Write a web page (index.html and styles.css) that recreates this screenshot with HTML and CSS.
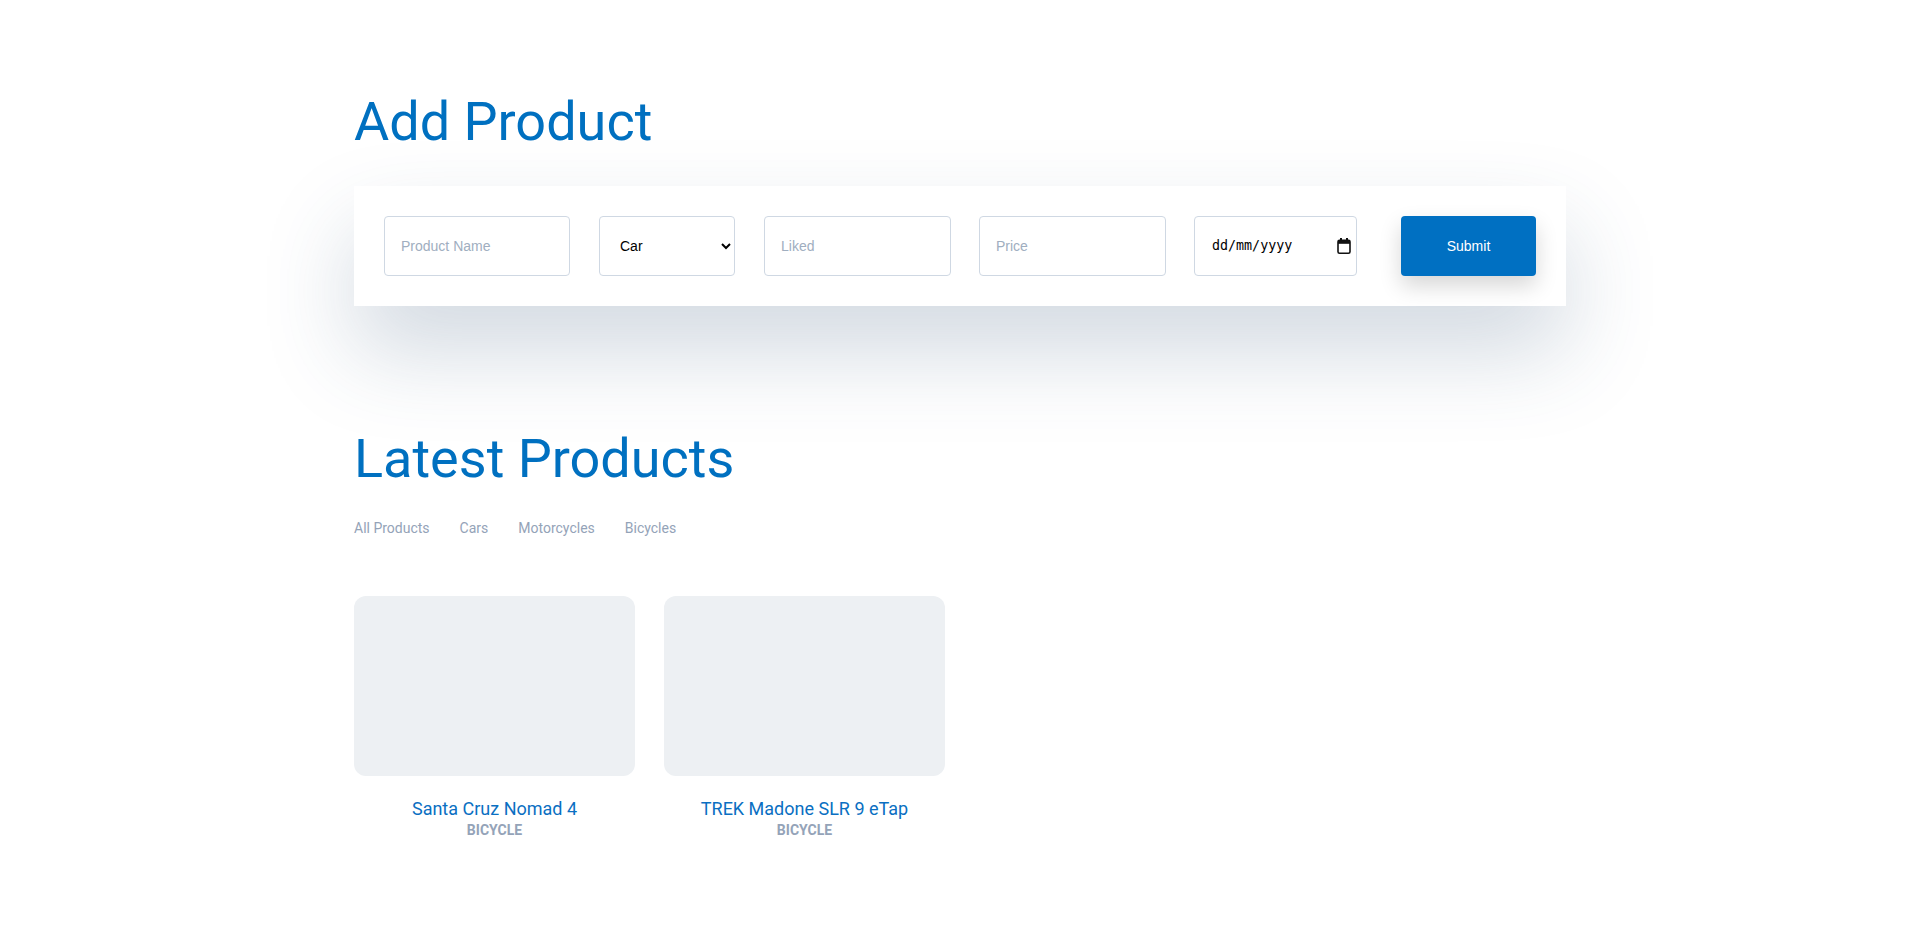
FILE: index.html
```html
<!DOCTYPE html>
<html lang="en-GB">
<head>
<meta charset="utf-8">
<title>Products</title>
<link rel="stylesheet" href="styles.css">
</head>
<body>
<main class="container">
  <h1 class="page-title">Add Product</h1>
  <form class="product-form">
    <input class="field field-name" type="text" placeholder="Product Name">
    <select class="field field-select">
      <option>Car</option>
      <option>Motorcycle</option>
      <option>Bicycle</option>
    </select>
    <input class="field field-liked" type="text" placeholder="Liked">
    <input class="field field-price" type="text" placeholder="Price">
    <label class="field field-date">
      <input class="date-text" type="text" placeholder="dd/mm/yyyy">
      <svg class="date-icon" width="14" height="16" viewBox="0 0 14 16" aria-hidden="true">
        <rect x="3" y="0" width="2" height="3" fill="#111"/>
        <rect x="9" y="0" width="2" height="3" fill="#111"/>
        <rect x="1" y="2.2" width="12" height="13" rx="1.5" fill="none" stroke="#111" stroke-width="1.6"/>
        <rect x="1" y="2.2" width="12" height="3.6" fill="#111"/>
      </svg>
    </label>
    <button class="submit-btn" type="button">Submit</button>
  </form>

  <h2 class="section-title">Latest Products</h2>
  <nav class="filters">
    <a class="filter">All Products</a>
    <a class="filter">Cars</a>
    <a class="filter">Motorcycles</a>
    <a class="filter">Bicycles</a>
  </nav>

  <section class="products">
    <article class="product">
      <div class="product-image"></div>
      <div class="product-name">Santa Cruz Nomad 4</div>
      <div class="product-type">Bicycle</div>
    </article>
    <article class="product">
      <div class="product-image"></div>
      <div class="product-name">TREK Madone SLR 9 eTap</div>
      <div class="product-type">Bicycle</div>
    </article>
  </section>
</main>
</body>
</html>
```
FILE: styles.css
```css
* { box-sizing: border-box; }

html, body {
  margin: 0;
  padding: 0;
  background: #ffffff;
}

body {
  font-family: Roboto, "Liberation Sans", Arial, sans-serif;
  color: #1f2937;
}

.container {
  width: 1212px;
  margin: 0 auto;
  padding-top: 90px;
}

.page-title,
.section-title {
  margin: 0;
  font-family: Roboto, sans-serif;
  font-weight: 400;
  font-size: 54px;
  line-height: 1.2;
  color: #0070c0;
}

.product-form {
  margin-top: 31px;
  height: 120px;
  padding: 30px;
  background: #ffffff;
  display: flex;
  align-items: center;
  box-shadow: 0 45px 90px rgba(50, 80, 120, 0.22);
}

.field {
  height: 60px;
  border: 1px solid #cfd8e3;
  border-radius: 4px;
  background: #ffffff;
  font-family: "Liberation Sans", Arial, sans-serif;
  font-size: 14px;
  color: #000000;
  padding: 0 16px;
  margin-right: 28px;
  outline: none;
}

.field::placeholder {
  color: #a0aec0;
}

.field-name { width: 186px; margin-right: 29px; }
.field-select { width: 136px; padding: 0 2px 0 16px; margin-right: 29px; }
.field-liked { width: 187px; }
.field-price { width: 187px; }

.field-date {
  width: 163px;
  padding: 0 5px 0 17px;
  margin-right: 44px;
  display: flex;
  align-items: center;
  justify-content: space-between;
  cursor: text;
}

.date-text {
  width: 100px;
  border: none;
  outline: none;
  padding: 0;
  background: transparent;
  font-family: "DejaVu Sans Mono", monospace;
  font-size: 13.33px;
  color: #000000;
}

.date-text::placeholder {
  color: #000000;
  opacity: 1;
}

.date-icon {
  display: block;
  flex: none;
}

.submit-btn {
  width: 135px;
  height: 60px;
  border: none;
  border-radius: 4px;
  background: #0070c2;
  color: #ffffff;
  font-family: "Liberation Sans", Arial, sans-serif;
  font-size: 14px;
  box-shadow: 0 10px 22px rgba(0, 0, 0, 0.16);
  cursor: pointer;
}

.section-title {
  margin-top: 121px;
}

.filters {
  margin-top: 28px;
  display: flex;
  gap: 30px;
}

.filter {
  font-family: Roboto, sans-serif;
  font-size: 14px;
  color: #94a3b8;
  text-decoration: none;
  cursor: pointer;
}

.products {
  margin-top: 60px;
  display: flex;
  gap: 29px;
}

.product {
  width: 281px;
  text-align: center;
}

.product-image {
  height: 180px;
  background: #edf0f3;
  border-radius: 12px;
}

.product-name {
  margin-top: 22px;
  font-family: Roboto, sans-serif;
  font-size: 18px;
  color: #0a6fc2;
}

.product-type {
  margin-top: 3px;
  font-family: Roboto, sans-serif;
  font-size: 14px;
  font-weight: 700;
  text-transform: uppercase;
  color: #94a3b8;
}
```
